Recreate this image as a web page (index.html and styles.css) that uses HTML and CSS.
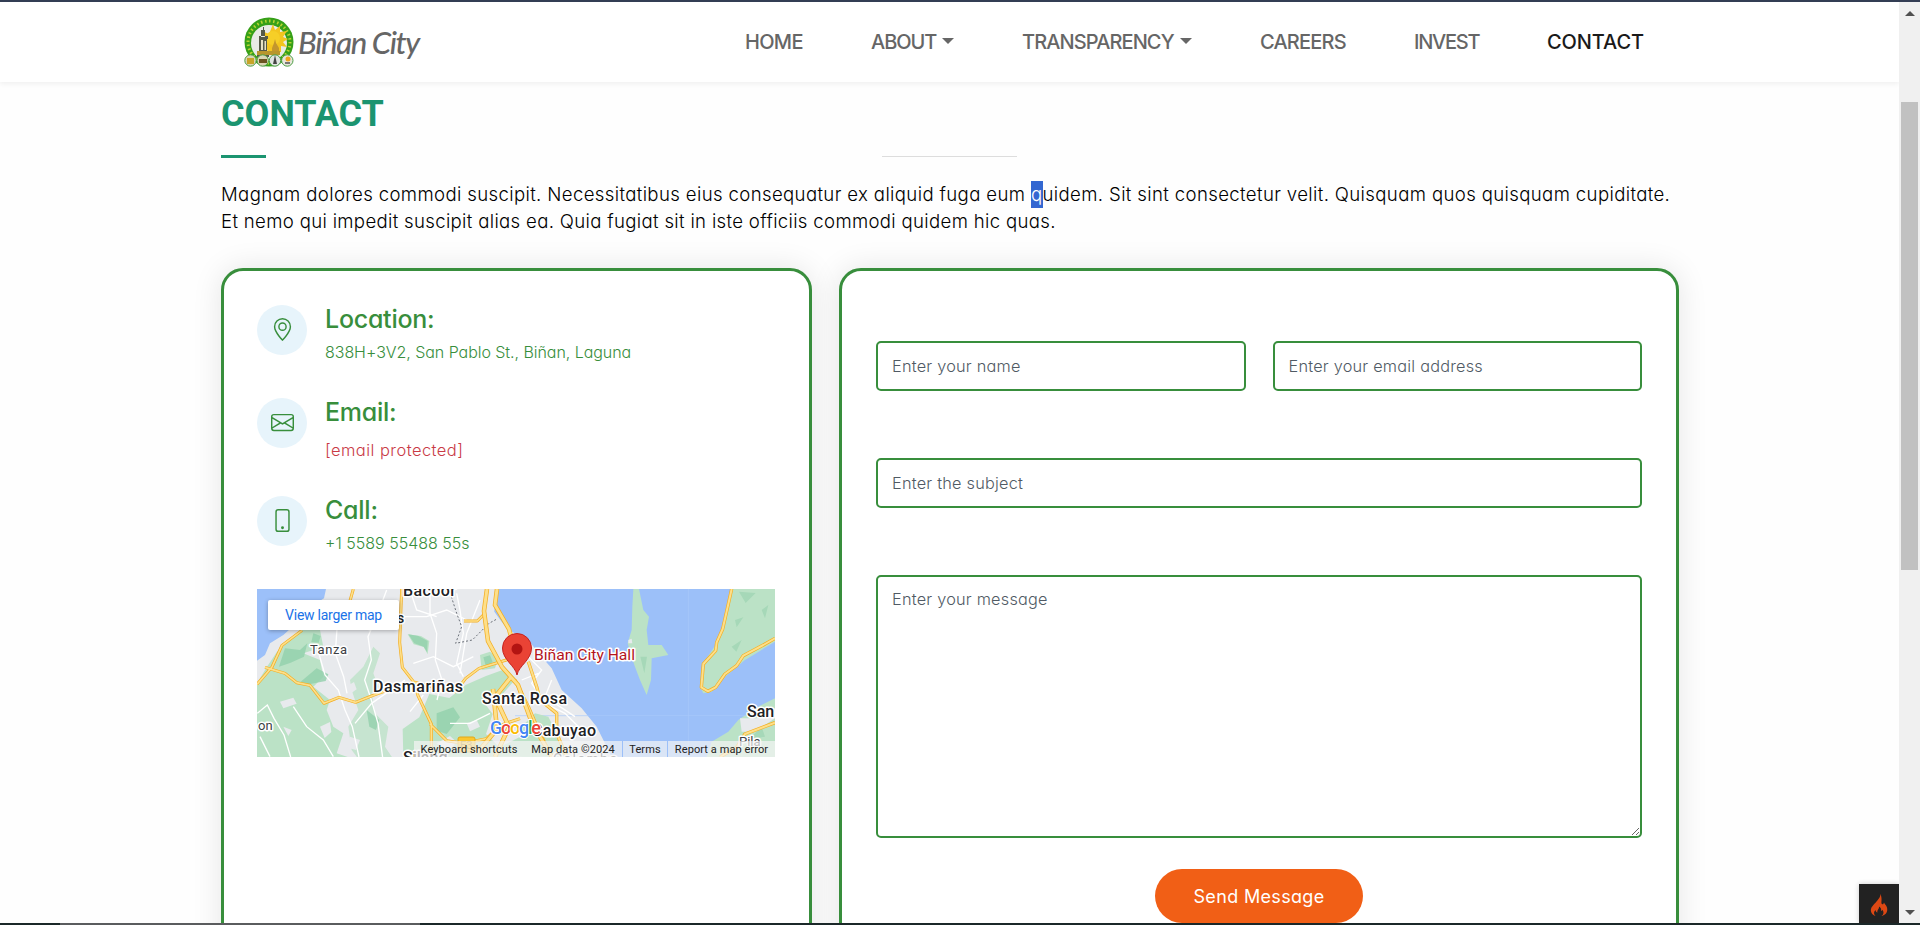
FILE: index.html
```html
<!DOCTYPE html>
<html lang="en">
<head>
<meta charset="utf-8">
<title>Biñan City - Contact</title>
<link rel="stylesheet" href="styles.css">
</head>
<body>
<div class="top-edge"></div>
<div class="viewport">
<div class="page">
  <header class="navbar">
    <a class="brand">
      <svg class="seal" viewBox="0 0 50 50">
        <circle cx="25" cy="25" r="24.5" fill="#36a018"/>
        <circle cx="25" cy="25" r="21" fill="none" stroke="#e3e63c" stroke-width="3" stroke-dasharray="1.5 2.600" opacity=".75"/>
        <circle cx="25" cy="26" r="18" fill="#e9ebe6"/>
        <path d="M29 7l2 6 5-4v6l7-1-4 6 5 2-5 3 4 5-6-1v6H24l-2-5-6 1 4-5-5-3 6-3-3-6 7 3z" fill="#f3c51f"/>
        <circle cx="29" cy="21" r="7" fill="#f6cf27"/>
        <path d="M17 20h4v-7h-1v-3h-1v3h-2zM15 19h9v3h-1v12h2v6H13v-6h2V22z" fill="#555a48"/>
        <path d="M17 23h2v10h-2zM20.500 24h1.500v9h-1.500z" fill="#e7e2c4"/>
        <path d="M28 38v-7l2-5 1-4 1 4 3 5v7z" fill="#c3962d"/>
        <path d="M13 34h23v4H13z" fill="#b8962d"/>
        <g stroke="#4b9e43"><circle cx="6.500" cy="43.500" r="5.700" fill="#d9d6b4"/><circle cx="18.700" cy="43.500" r="5.700" fill="#d9d6b4"/><circle cx="31" cy="43.500" r="5.700" fill="#dfe4e0"/><circle cx="43.300" cy="43.500" r="5.700" fill="#e8e6dc"/></g>
        <path d="M3 41h7v6H3z" fill="#c7a428"/><path d="M15 42h8v4h-8z" fill="#6b5520"/><path d="M31 38l2 9h-4z" fill="#444"/><circle cx="44" cy="42" r="2.500" fill="#f0a41c"/><path d="M41 45h5v2h-5z" fill="#777"/>
      </svg>
      <span class="brand-name">Biñan City</span>
    </a>
    <nav class="menu">
      <a class="item home">HOME</a>
      <a class="item about">ABOUT<i class="caret"></i></a>
      <a class="item transparency">TRANSPARENCY<i class="caret"></i></a>
      <a class="item careers">CAREERS</a>
      <a class="item invest">INVEST</a>
      <a class="item contact">CONTACT</a>
    </nav>
  </header>
  <main class="container">
    <h2>CONTACT</h2>
    <div class="rules"><span class="bar"></span><span class="line"></span></div>
    <p class="intro"><span class="first">Magnam dolores commodi suscipit. Necessitatibus eius consequatur ex aliquid fuga eum <mark>q</mark>uidem. Sit sint consectetur velit. Quisquam quos quisquam cupiditate.</span><br><span class="second">Et nemo qui impedit suscipit alias ea. Quia fugiat sit in iste officiis commodi quidem hic quas.</span></p>
    <div class="cards">
      <section class="card info">
        <div class="row">
          <span class="ico"><svg viewBox="0 0 16 16"><path d="M12.166 8.940c-.524 1.062-1.234 2.120-1.960 3.070A32 32 0 0 1 8 14.580a32 32 0 0 1-2.206-2.570c-.726-.950-1.436-2.008-1.960-3.070C3.304 7.867 3 6.862 3 6a5 5 0 0 1 10 0c0 .862-.305 1.867-.834 2.940M8 16s6-5.686 6-10A6 6 0 0 0 2 6c0 4.314 6 10 6 10"/><path d="M8 8a2 2 0 1 1 0-4 2 2 0 0 1 0 4m0 1a3 3 0 1 0 0-6 3 3 0 0 0 0 6"/></svg></span>
          <div><h4>Location:</h4><p class="address">838H+3V2, San Pablo St., Biñan, Laguna</p></div>
        </div>
        <div class="row mail">
          <span class="ico"><svg viewBox="0 0 16 16"><path d="M0 4a2 2 0 0 1 2-2h12a2 2 0 0 1 2 2v8a2 2 0 0 1-2 2H2a2 2 0 0 1-2-2zm2-1a1 1 0 0 0-1 1v.217l7 4.200 7-4.200V4a1 1 0 0 0-1-1zm13 2.383-4.708 2.825L15 11.105zm-.034 6.876-5.640-3.471L8 9.583l-1.326-.795-5.640 3.470A1 1 0 0 0 2 13h12a1 1 0 0 0 .966-.741M1 11.105l4.708-2.897L1 5.383z"/></svg></span>
          <div><h4>Email:</h4><p class="email">[email protected]</p></div>
        </div>
        <div class="row">
          <span class="ico"><svg viewBox="0 0 16 16"><path d="M11 1a1 1 0 0 1 1 1v12a1 1 0 0 1-1 1H5a1 1 0 0 1-1-1V2a1 1 0 0 1 1-1zM5 0a2 2 0 0 0-2 2v12a2 2 0 0 0 2 2h6a2 2 0 0 0 2-2V2a2 2 0 0 0-2-2z"/><path d="M8 14a1 1 0 1 0 0-2 1 1 0 0 0 0 2"/></svg></span>
          <div><h4>Call:</h4><p>+1 5589 55488 55s</p></div>
        </div>
        <div class="map">
          <svg class="tiles" viewBox="0 0 518 168">
            <rect width="518" height="168" fill="#e8eaed"/>
            <!-- western half: coast, parks, streets -->
            <g transform="translate(-7 -9) scale(.33333)">
              <path d="M21 27H228L222 55 190 75 150 120 100 165 60 190 45 225 21 242z" fill="#9cc0f9"/>
              <g fill="#bbe2c6">
                <path d="M150 150l60 0 10 50-60 20 50 20 10 50-30 30 50 40-10 30 20 50 30 20-20 60 60 20 40 60H21V310l30-50 30-45z"/>
                <path d="M300 300l40-40 30-60 20 20-20 60 15 40-20 20 10 60 40 40-10 60 40 60-80 30-60-80-10-70 30-50-20-60z" opacity=".75"/>
                <path d="M473 163l40 5 25 15-5 40-12-22-30-8z"/>
                <path d="M460 531l-2-84 50-35 30-70 60 12 50-40 60-26 60-22 30 30-40 46-60 20 30 40-20 60 40 40 60-30 60 10v48z"/>
                <path d="M690 225l30-10 25 20-10 30-40 5z"/>
              </g>
              <g fill="#93d1ad" opacity=".8">
                <path d="M105 205l45 5 22-20-10 40-40 18-35 12zM190 160l22 8-6 20-22-2zM200 265l35 18-8 20-50 10-25-8zM350 390l38 30-10 30-20-10z"/>
                <path d="M475 163l30 5 28 15-2 33-10-16-28-10zM560 400l50-18 20 30-40 50-30-10zM700 232l20-6 8 20-20 14z"/>
              </g>
              <g fill="#e8eaed"><path d="M90 365l40-12 10 18-40 14zM210 440l30-14 4 30-20 18zM288 320l24-14 8 22-20 14zM560 490l40-22 20 18-22 26zM300 470l30 10-12 30-30-8zM650 430l30-10 10 20-30 14zM100 440l25 10-10 18z"/></g>
              <g fill="none" stroke="#fff" stroke-width="4">
                <path d="M205 215l20 70 40 45 20 60 22 50 20 91M262 130l-6 90 25 70 10 50M384 100l-30 70 10 70-20 60 20 60 20 70 15 110M22 400l30-25 20 40 30 50 20 66M130 380l40 60 50 40 30 50M300 130l60 20 90-40 80 0 60-20 60 30M540 40l0 60 20 60-4 80 20 60-15 60M620 40l10 50 10 70-20 90 20 40M465 300l-100 70-50 60M490 250l60-20 60 30 60-30M220 130l160 10M410 30l-30 80M480 30l20 60 60 20M690 60l-40 100-20 120M600 430l60 0 60-30M30 470l30 60M480 395l40-50"/>
              </g>
              <g fill="none" stroke="#f4ae22" stroke-width="9" stroke-linejoin="round">
                <path d="M21 313l45-52 30-65 60-45M45 262l60 18 35 28 40 8 42 54 45-18 50 15 50-20 50-18 80-22 66 18 54 10 30-40 40-30 82-25 35-22M455 27l-6 160 8 75 35 45 12 40 40 85 0 100M540 432l50 50 50 8 70-14 40-40 60-20M310 27l-14 50-30 25M642 123l40 0 18-18"/>
              </g>
              <g fill="none" stroke="#fddf8a" stroke-width="5" stroke-linejoin="round">
                <path d="M21 313l45-52 30-65 60-45M45 262l60 18 35 28 40 8 42 54 45-18 50 15 50-20 50-18 80-22 66 18 54 10 30-40 40-30 82-25 35-22M455 27l-6 160 8 75 35 45 12 40 40 85 0 100M540 432l50 50 50 8 70-14 40-40 60-20M310 27l-14 50-30 25M642 123l40 0 18-18"/>
              </g>
              <path d="M604 50l16 50 15 40-18 50 50-10 50-50 22-12" fill="none" stroke="#6b7078" stroke-width="3" stroke-dasharray="6 6"/>
            </g>
            <!-- eastern half: lake, island and peninsula -->
            <g transform="translate(258 -9) scale(.33333)">
              <path d="M-60 27H780V531H290L265 480 245 440 200 385 140 330 110 265 75 225 40 180-20 150-40 125-62 95z" fill="#9cc0f9"/>
              <path d="M355 27h17l13 63 17 20-7 40 5 45h40l20 30-50 10-2 65-13 45-20-45-17-45-20-65 12-40 2-70zM650 27H780V185l-90 55-60 50-40 45-25 5-10-20 10-70 40-60 20-50 15-80zM780 355l-60 30-50 35-30 35-50 30-15 46h205z" fill="#bbe2c6"/>
              <path d="M672 35l50 4-30 30zM660 120l25-8-20 30zM740 90l20-15-10 40zM650 200l30-20-16 35zM376 230l20 0-8 50zM700 480l40-40 10 30z" fill="#a6d8b8"/>
              <path d="M675 415l50 0 30-25 25-5v30l-60 40-40 0zM340 180l10-4 2 14h-12z" fill="#e8eaed"/>
              <path d="M0 407H780M520 27v504" stroke="#a9c9fb" stroke-width="2"/>
              <path d="M60 400l40 10 25 50 40 70H20V440z" fill="#bbe2c6"/>
              <path d="M40 230l40 40-30 40 40 60 60 30 60 60M70 280l-50 20M110 300l-20 50 90 60" fill="none" stroke="#fff" stroke-width="4"/>
              <g fill="none" stroke="#f4ae22" stroke-width="10" stroke-linejoin="round"><path d="M40 245l25 75 10 40 50 40 0 60 30 71M0 300l40 80 30 70 40 81M650 27l-10 45-17 75-18 40-3 25-37 40-6 70 20 12 23-12 28-40 35-25 20-30 60-32 35-20M780 428l-90 34-25 40-50 29"/></g>
              <g fill="none" stroke="#fddf8a" stroke-width="6" stroke-linejoin="round"><path d="M40 245l25 75 10 40 50 40 0 60 30 71M0 300l40 80 30 70 40 81M650 27l-10 45-17 75-18 40-3 25-37 40-6 70 20 12 23-12 28-40 35-25 20-30 60-32 35-20M780 428l-90 34-25 40-50 29"/></g>
            </g>
            <path d="M230 0l-3 22 4 30 14 26 16 18 14 38 20 34M240 0l-2 16 14 24 8 30M238 168l14-30-14-30 16-20M236 100l4 40-20 24" fill="none" stroke="#f4ae22" stroke-width="4.500"/>
            <path d="M230 0l-3 22 4 30 14 26 16 18 14 38 20 34M240 0l-2 16 14 24 8 30M238 168l14-30-14-30 16-20M236 100l4 40-20 24" fill="none" stroke="#fddf8a" stroke-width="3"/>
            <rect x="201" y="148" width="17" height="15" rx="2" fill="#fbc62f" stroke="#e0a81a"/>
            <g class="places">
              <text x="146" y="7" font-size="16" textLength="53">Bacoor</text>
              <text x="140" y="34" font-size="14">s</text>
              <text class="town" x="53" y="65" font-size="13" textLength="37">Tanza</text>
              <text x="116" y="103" font-size="16" textLength="90">Dasmariñas</text>
              <text x="225" y="115" font-size="16" textLength="85">Santa Rosa</text>
              <text x="275" y="147" font-size="16" textLength="64">Cabuyao</text>
              <text class="town" x="1" y="141" font-size="13">on</text>
              <text x="146" y="174" font-size="16">Silang</text>
              <text class="town" x="296" y="175" font-size="14" textLength="64">Calamba</text>
              <text x="490" y="128" font-size="16">San</text>
              <text class="town" x="482" y="157" font-size="13">Pila</text>
              <text class="hall" x="277" y="71" font-size="15.500" textLength="101" lengthAdjust="spacingAndGlyphs">Biñan City Hall</text>
            </g>
            <text class="badge" x="203" y="160" font-size="11">E3</text>
            <path d="M260 86c-1.500-9-14.500-15-14.500-27a14.500 14.500 0 0 1 29 0c0 12-13 18-14.500 27z" fill="#ea4335" stroke="#c5221f"/>
            <circle cx="260" cy="60" r="5.500" fill="#b31412"/>
            <text class="logo" x="233" y="145" font-size="18" textLength="51"><tspan fill="#4285f4">G</tspan><tspan fill="#ea4335">o</tspan><tspan fill="#fbbc04">o</tspan><tspan fill="#4285f4">g</tspan><tspan fill="#34a853">l</tspan><tspan fill="#ea4335">e</tspan></text>
          </svg>
          <a class="larger">View larger map</a>
          <div class="legal"><span class="keys">Keyboard shortcuts</span><span class="data">Map data ©2024</span><span class="terms">Terms</span><span class="report">Report a map error</span></div>
        </div>
      </section>
      <form class="card form">
        <div class="two">
          <input class="field" placeholder="Enter your name">
          <input class="field" placeholder="Enter your email address">
        </div>
        <input class="field" placeholder="Enter the subject">
        <textarea class="field area" placeholder="Enter your message"></textarea>
        <button class="send" type="button">Send Message</button>
      </form>
    </div>
  </main>
  <div class="debug-icon"><svg viewBox="0 0 18 23"><path d="M9.500 0c2 3-.5 5.500-3 8.500C4 11.500 0 14.500 1 18.500c.5 2 2 3.600 4.500 4.500-2-2-2-4 0-6 .3 1.500.8 2.200 2 2.500-.8-2.500 2-3.500 1.500-6 2 1 2.500 3 2 4.500.8 0 1.200-.5 1.300-1.200 1.700 2 1.700 4.700-.8 6.200 4.500-1 6.500-4.500 5.500-8.500-.7-2.500-3-4-3-5-.5 1-.5 2-1.700 1.800C10 10.800 13.500 5 9.500 0z" fill="#dd4814"/></svg></div>
</div>
<div class="scrollbar"><i class="up"></i><span class="thumb"></span><i class="down"></i></div>
</div>
<div class="bottom-edge"><span></span></div>
</body>
</html>
```

FILE: styles.css
```css
* { box-sizing: border-box; margin: 0; padding: 0; }
body { width: 1920px; height: 925px; overflow: hidden; background: #fff; font-family: Inter, "Open Sans", sans-serif; font-feature-settings: "cv11"; }
.top-edge { height: 2px; background: #333d54; }
.viewport { height: 921px; display: grid; grid-template-columns: 1899px 21px; overflow: hidden; }
.page { position: relative; height: 921px; overflow: hidden; background: #fefefe; }

.navbar { height: 80px; display: flex; align-items: center; background: #fff; box-shadow: 0 2px 5px rgba(0,0,0,.06); }
.brand { display: flex; align-items: center; gap: 4px; width: 501px; margin-left: 244px; }
.seal { width: 50px; height: 50px; }
.brand-name { font: italic 500 31px/36px Lato, sans-serif; letter-spacing: -1.350px; color: #666; white-space: nowrap; margin-top: -1px; }
.menu { display: flex; gap: 68px; }
.item { display: flex; align-items: center; justify-content: space-between; font-size: 20px; line-height: 30px; font-weight: 550; color: #666; white-space: nowrap; }
.home { width: 58px; letter-spacing: -.7px; }
.about { width: 83px; letter-spacing: -1.050px; }
.transparency { width: 170px; letter-spacing: -.9px; }
.careers { width: 86px; letter-spacing: -.8px; }
.invest { width: 65px; letter-spacing: -1.250px; }
.contact { width: 98px; letter-spacing: -.1px; color: #1a1a1a; }
.caret { border: 6px solid transparent; border-top-color: #666; border-bottom: 0; margin-top: -2px; }

.container { width: 1458px; margin-left: 221px; padding-top: 14px; }
h2 { font: 700 36px/36px Roboto, sans-serif; color: #1b9470; }
.rules { display: flex; align-items: center; margin-top: 23px; height: 3px; }
.bar { width: 45px; height: 3px; background: #1b9470; }
.line { width: 135px; height: 1px; margin-left: 616px; background: #ddd; }
.intro { margin-top: 23px; font-size: 18.600px; font-weight: 300; line-height: 27px; color: #000; white-space: nowrap; }
.first { letter-spacing: .362px; }
.second { letter-spacing: .325px; }
mark { display: inline-block; height: 27px; vertical-align: top; background: #3367d1; color: #fff; }

.cards { display: grid; grid-template-columns: 591px 840px; gap: 27px; margin-top: 33px; }
.card { height: 720px; border: 3px solid #388e3c; border-radius: 22px; background: #fff; box-shadow: 0 0 30px rgba(0,0,0,.1); }
.info { padding: 34px 33px; color: #388e3c; }
.row { display: flex; gap: 18px; height: 93px; }
.ico { display: flex; align-items: center; justify-content: center; width: 50px; height: 50px; border-radius: 50%; background: #e7f4fb; }
.ico svg { width: 23px; height: 23px; margin-top: -1px; fill: #388e3c; }
h4 { margin-top: -1px; font-size: 25px; line-height: 30px; font-weight: 550; letter-spacing: -.25px; }
.row p { margin-top: 6px; font-size: 16px; line-height: 24px; font-weight: 300; }
.row .address { letter-spacing: -.05px; }
.mail { height: 98px; }
.row .email { margin-top: 11px; font-size: 16.500px; letter-spacing: .45px; color: #c93a46; }

.map { position: relative; width: 518px; height: 168px; overflow: hidden; font-family: Roboto, sans-serif; }
.tiles { display: block; width: 518px; height: 168px; }
.places text { font-weight: 500; fill: #202124; stroke: #fff; stroke-width: 3px; stroke-linejoin: round; paint-order: stroke; }
.places .town { font-weight: 400; fill: #3c4043; }
.places .hall { font-weight: 400; fill: #b3141c; }
.badge { fill: #a87b10; }
.logo { font-weight: 500; stroke: #fff; stroke-width: 2px; paint-order: stroke; }
.larger { position: absolute; left: 11px; top: 11px; width: 131px; height: 30px; border-radius: 2px; background: #fff; box-shadow: 0 1px 4px rgba(0,0,0,.3); font-size: 14px; line-height: 30px; letter-spacing: -.25px; text-align: center; color: #1a73e8; }
.legal { position: absolute; right: 0; bottom: 0; display: flex; height: 16px; font-size: 11px; line-height: 17px; letter-spacing: .08px; color: #222; white-space: nowrap; }
.legal span { background: rgba(245,245,245,.7); text-align: center; }
.keys { width: 110px; }
.data { width: 98px; }
.terms { width: 44px; margin-left: 1px; }
.report { width: 107px; margin-left: 1px; }

.form { display: flex; flex-direction: column; padding: 70px 34px 0; }
.two { display: grid; grid-template-columns: 1fr 1fr; gap: 27px; }
.field { display: block; width: 100%; height: 50px; margin-bottom: 67px; padding: 0 14px 1px; border: 2px solid #388e3c; border-radius: 5px; background: #fff; font: 300 16.300px/24px Inter, sans-serif; font-feature-settings: "cv11"; letter-spacing: .22px; }
.field::placeholder { color: #505a64; opacity: 1; }
.area { height: 263px; margin-bottom: 31px; padding-top: 10px; }
.send { align-self: center; width: 208px; height: 54px; border: 0; border-radius: 27px; background: #f15f16; color: #fff; font: 400 18px/27px Inter, sans-serif; font-feature-settings: "cv11"; letter-spacing: .33px; }

.debug-icon { position: absolute; right: 0; bottom: 0; display: flex; justify-content: center; width: 40px; height: 39px; padding-top: 9px; background: #222; box-shadow: 0 0 5px rgba(0,0,0,.2); }
.debug-icon svg { width: 18px; height: 23px; }

.scrollbar { display: flex; flex-direction: column; align-items: center; background: #f0f0f0; padding: 9px 0 8px; }
.up { border: 5px solid transparent; border-bottom-color: #505050; border-top: 0; }
.thumb { width: 17px; height: 468px; margin-top: 86px; background: #c1c1c1; }
.down { border: 5px solid transparent; border-top-color: #505050; border-bottom: 0; margin-top: auto; }
.bottom-edge { height: 2px; background: #1b2829; }
.bottom-edge span { display: block; width: 360px; height: 2px; margin-left: 60px; background: #5a5c5e; }
```
